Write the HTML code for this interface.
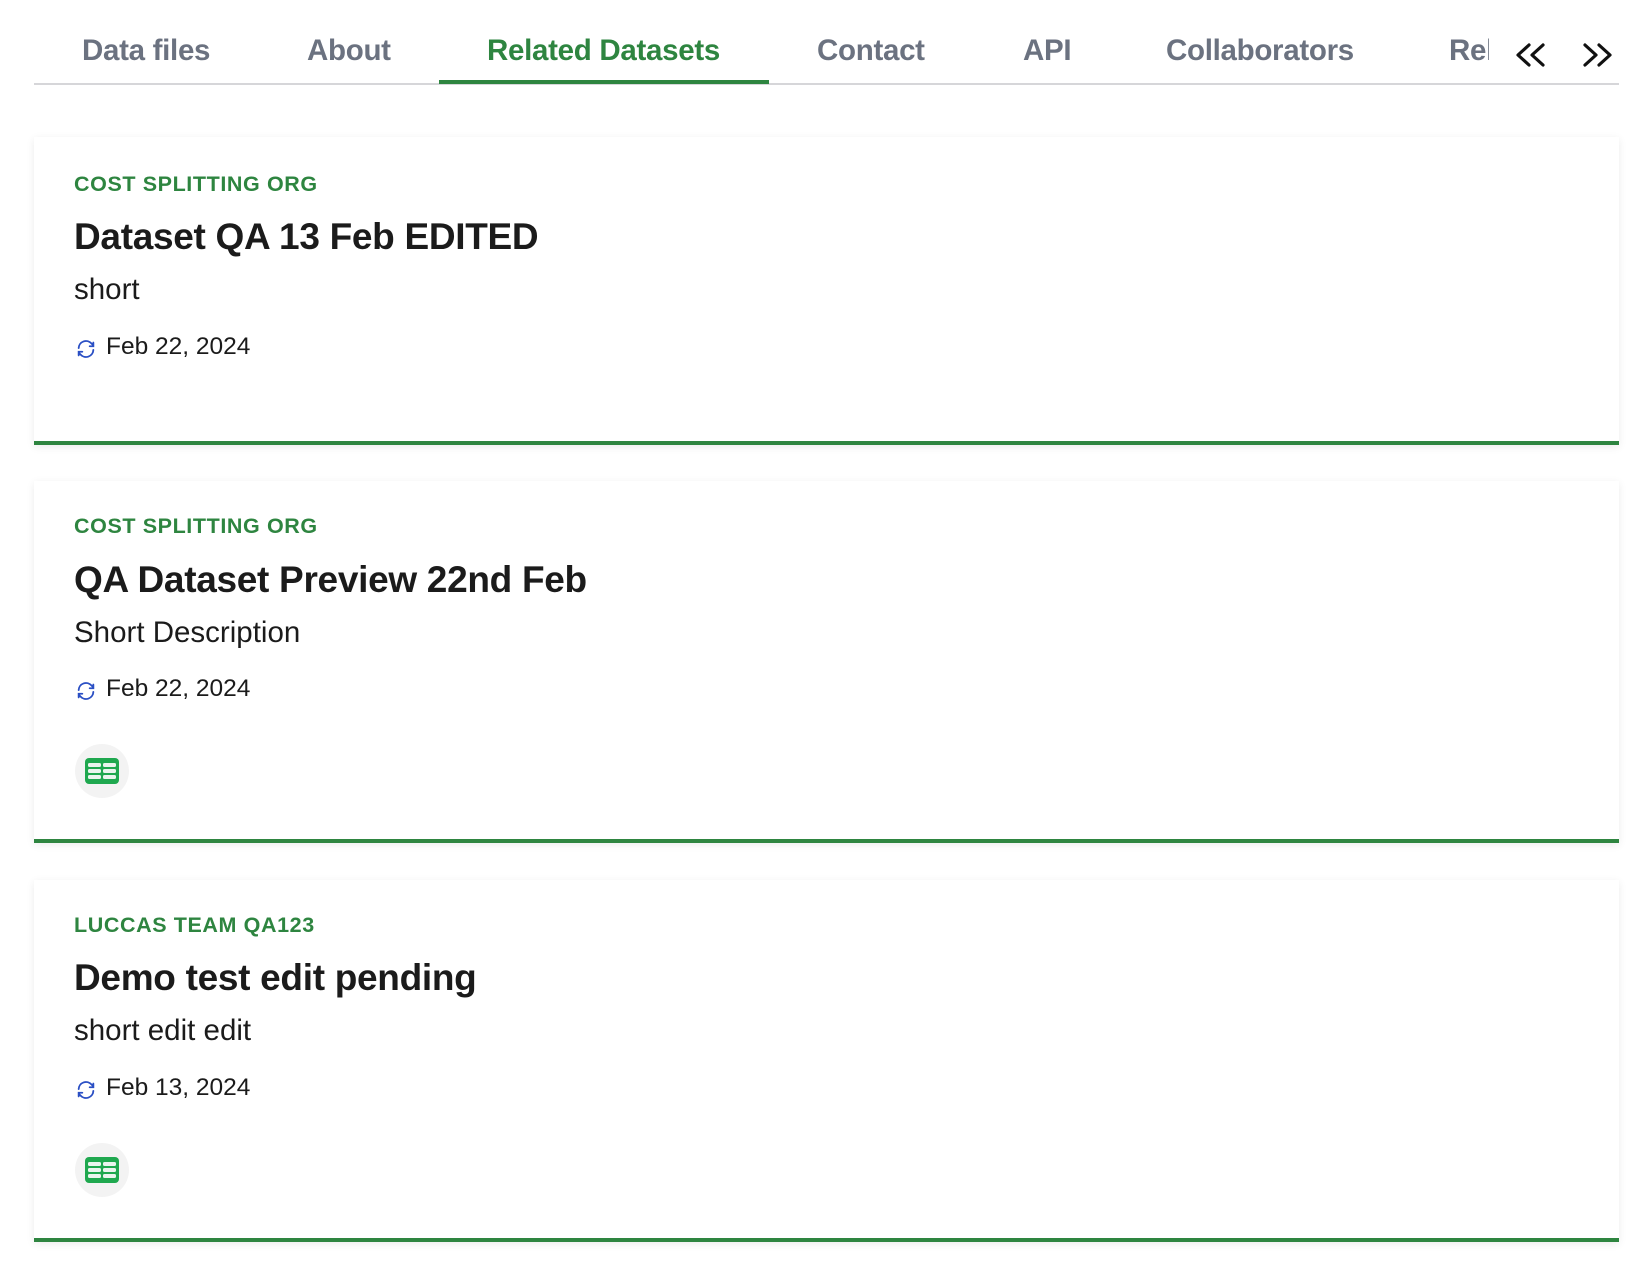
<!DOCTYPE html>
<html><head><meta charset="utf-8">
<style>
*{margin:0;padding:0;box-sizing:border-box}
html,body{width:1646px;height:1268px;background:#fff;overflow:hidden;font-family:"Liberation Sans",sans-serif;position:relative}
.tab{position:absolute;top:34px;font-size:29.5px;font-weight:bold;color:#6b7280;white-space:nowrap;letter-spacing:-0.3px}
.tabline{position:absolute;left:34px;top:83px;width:1585px;height:2px;background:#d6d6d9}
.active{position:absolute;left:439px;top:80px;width:330px;height:4px;background:#2e8540}
.card{position:absolute;left:34px;width:1585px;background:#fff;border-bottom:4px solid #2e8540;box-shadow:0 2px 8px rgba(0,0,0,0.08)}
.org{position:absolute;left:74px;font-size:21.5px;font-weight:bold;color:#2e8540;letter-spacing:0.6px}
.title{position:absolute;left:74px;font-size:37px;font-weight:bold;color:#1b1b1b;letter-spacing:-0.3px}
.desc{position:absolute;left:74px;font-size:29.5px;color:#1b1b1b}
.date{position:absolute;left:106px;font-size:24.5px;color:#1b1b1b}
.ic{position:absolute;left:75px;width:22px;height:22px}
.res{position:absolute;left:75px;width:54px;height:54px;border-radius:50%;background:#f3f3f3}
.res svg{position:absolute;left:9px;top:13px}
</style></head><body>
<div class="tab" style="left:82px">Data files</div>
<div class="tab" style="left:307px">About</div>
<div class="tab" style="left:487px;color:#2e8540">Related Datasets</div>
<div class="tab" style="left:817px">Contact</div>
<div class="tab" style="left:1023px">API</div>
<div class="tab" style="left:1166px">Collaborators</div>
<div class="tab" style="left:1449px;width:40px;overflow:hidden">Related</div>
<svg style="position:absolute;left:1514px;top:42px" width="34" height="26" viewBox="0 0 34 26"><path d="M15 3 L4 13 L15 23 M29 3 L18 13 L29 23" fill="none" stroke="#111" stroke-width="3.2" stroke-linecap="round" stroke-linejoin="round"/></svg>
<svg style="position:absolute;left:1580px;top:42px" width="34" height="26" viewBox="0 0 34 26"><path d="M5 3 L16 13 L5 23 M19 3 L30 13 L19 23" fill="none" stroke="#111" stroke-width="3.2" stroke-linecap="round" stroke-linejoin="round"/></svg>
<div class="tabline"></div>
<div class="active"></div>

<div class="card" style="top:137px;height:308px"></div>
<div class="card" style="top:481px;height:362px"></div>
<div class="card" style="top:880px;height:362px"></div>

<div class="org" style="top:172px">COST SPLITTING ORG</div>
<div class="title" style="top:216px">Dataset QA 13 Feb EDITED</div>
<div class="desc" style="top:273px">short</div>
<svg class="ic" style="top:338px" viewBox="0 0 24 24"><path d="M4 11a8 8 0 0 1 14-5l2 2M20 5v4h-4M20 13a8 8 0 0 1-14 5l-2-2M4 19v-4h4" fill="none" stroke="#2a4fc4" stroke-width="2" stroke-linecap="round"/></svg>
<div class="date" style="top:333px">Feb 22, 2024</div>

<div class="org" style="top:514px">COST SPLITTING ORG</div>
<div class="title" style="top:559px">QA Dataset Preview 22nd Feb</div>
<div class="desc" style="top:616px">Short Description</div>
<svg class="ic" style="top:680px" viewBox="0 0 24 24"><path d="M4 11a8 8 0 0 1 14-5l2 2M20 5v4h-4M20 13a8 8 0 0 1-14 5l-2-2M4 19v-4h4" fill="none" stroke="#2a4fc4" stroke-width="2" stroke-linecap="round"/></svg>
<div class="date" style="top:675px">Feb 22, 2024</div>
<div class="res" style="top:744px"><svg width="36" height="28" viewBox="0 0 36 28"><rect x="1" y="1" width="34" height="26" rx="4" fill="#1fa84f"/><g fill="#eaf5ee"><rect x="4" y="6" width="13" height="4" rx="1.5"/><rect x="19" y="6" width="13" height="4" rx="1.5"/><rect x="4" y="12" width="13" height="4" rx="1.5"/><rect x="19" y="12" width="13" height="4" rx="1.5"/><rect x="4" y="18" width="13" height="4" rx="1.5"/><rect x="19" y="18" width="13" height="4" rx="1.5"/></g></svg></div>

<div class="org" style="top:913px">LUCCAS TEAM QA123</div>
<div class="title" style="top:957px">Demo test edit pending</div>
<div class="desc" style="top:1014px">short edit edit</div>
<svg class="ic" style="top:1079px" viewBox="0 0 24 24"><path d="M4 11a8 8 0 0 1 14-5l2 2M20 5v4h-4M20 13a8 8 0 0 1-14 5l-2-2M4 19v-4h4" fill="none" stroke="#2a4fc4" stroke-width="2" stroke-linecap="round"/></svg>
<div class="date" style="top:1074px">Feb 13, 2024</div>
<div class="res" style="top:1143px"><svg width="36" height="28" viewBox="0 0 36 28"><rect x="1" y="1" width="34" height="26" rx="4" fill="#1fa84f"/><g fill="#eaf5ee"><rect x="4" y="6" width="13" height="4" rx="1.5"/><rect x="19" y="6" width="13" height="4" rx="1.5"/><rect x="4" y="12" width="13" height="4" rx="1.5"/><rect x="19" y="12" width="13" height="4" rx="1.5"/><rect x="4" y="18" width="13" height="4" rx="1.5"/><rect x="19" y="18" width="13" height="4" rx="1.5"/></g></svg></div>
</body></html>
